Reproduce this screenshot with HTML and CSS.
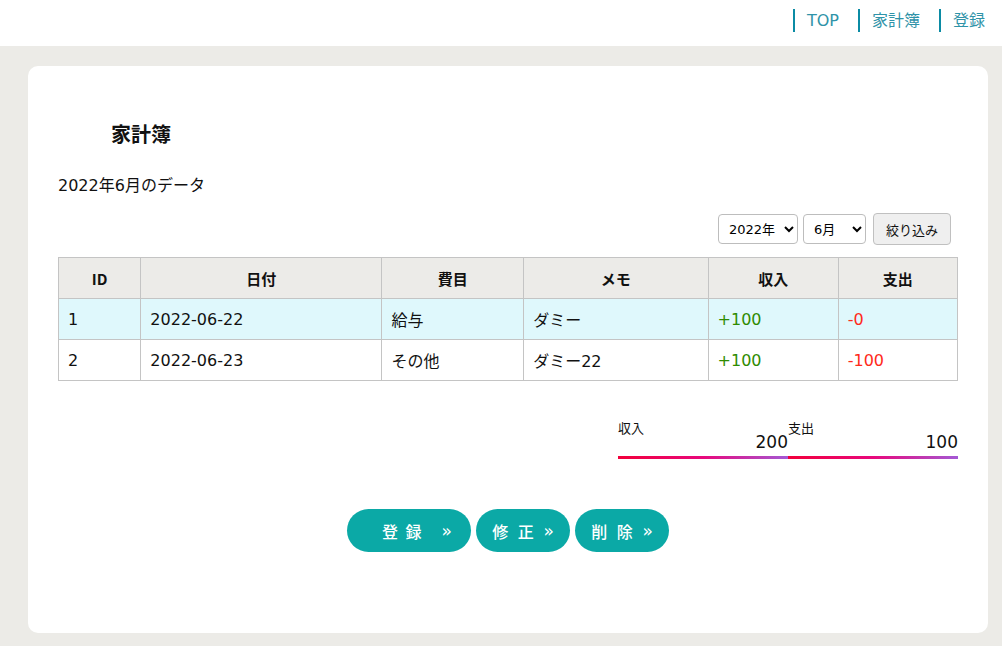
FILE: index.html
```html
<!DOCTYPE html>
<html lang="ja">
<head>
<meta charset="utf-8">
<title>家計簿</title>
<link rel="stylesheet" href="styles.css">
</head>
<body>
<header class="header">
  <nav class="nav">
    <a class="nav-item" href="#">TOP</a>
    <a class="nav-item" href="#">家計簿</a>
    <a class="nav-item" href="#">登録</a>
  </nav>
</header>
<main class="card">
  <h1 class="title">家計簿</h1>
  <p class="subtitle">2022年6月のデータ</p>
  <form class="filter">
    <select class="sel sel-year"><option>2022年</option></select>
    <select class="sel sel-month"><option>6月</option></select>
    <button type="button" class="filter-btn">絞り込み</button>
  </form>
  <table class="table">
    <thead>
      <tr><th class="c-id">ID</th><th class="c-date">日付</th><th class="c-cat">費目</th><th class="c-memo">メモ</th><th class="c-in">収入</th><th class="c-out">支出</th></tr>
    </thead>
    <tbody>
      <tr class="hl"><td>1</td><td>2022-06-22</td><td>給与</td><td>ダミー</td><td class="plus">+100</td><td class="minus">-0</td></tr>
      <tr><td>2</td><td>2022-06-23</td><td>その他</td><td>ダミー22</td><td class="plus">+100</td><td class="minus">-100</td></tr>
    </tbody>
  </table>
  <div class="totals">
    <div class="total"><span class="total-label">収入</span><span class="total-num">200</span></div>
    <div class="total"><span class="total-label">支出</span><span class="total-num">100</span></div>
  </div>
  <div class="actions">
    <a class="btn btn-wide" href="#">登 録　<span class="arr">»</span></a>
    <a class="btn" href="#">修 正 <span class="arr">»</span></a>
    <a class="btn" href="#">削 除 <span class="arr">»</span></a>
  </div>
</main>
</body>
</html>
```
FILE: styles.css
```css
html, body { margin: 0; padding: 0; }
body {
  background: #ecebe7;
  font-family: "DejaVu Sans", "Noto Sans CJK JP", sans-serif;
  color: #111;
  font-size: 16px;
}
.header {
  background: #fff;
  height: 46px;
  display: flex;
  justify-content: flex-end;
  align-items: flex-start;
}
.nav {
  display: flex;
  padding: 9px 17px 0 0;
}
.nav-item {
  display: block;
  border-left: 2px solid #0b8ba4;
  padding-left: 12px;
  margin-left: 19px;
  line-height: 23px;
  color: #2f93a8;
  text-decoration: none;
  font-size: 16px;
  font-family: "DejaVu Sans", "Noto Sans CJK JP", sans-serif;
}
.nav-item:first-child { margin-left: 0; }
.card {
  display: block;
  background: #fff;
  margin: 20px 14px 0 28px;
  height: 567px;
  border-radius: 10px;
  padding: 0 30px;
  box-sizing: border-box;
}
.title {
  margin: 0;
  padding: 54px 0 0 53px;
  font-size: 20px;
  line-height: 28px;
  font-weight: bold;
  font-family: "Noto Sans CJK JP", sans-serif;
}
.subtitle {
  margin: 26px 0 0;
  font-size: 16px;
  line-height: 24px;
}
.filter {
  display: flex;
  justify-content: flex-end;
  align-items: center;
  gap: 5px;
  margin: 14px 7px 0 0;
  height: 34px;
}
.sel {
  height: 30px;
  border: 1px solid #bdbdbd;
  border-radius: 4px;
  background: #fff;
  font-size: 13px;
  font-family: "DejaVu Sans", "Noto Sans CJK JP", sans-serif;
  padding: 0 4px 0 6px;
  color: #000;
}
.sel-year { width: 80px; }
.sel-month { width: 63px; margin-right: 2px; }
.filter-btn {
  width: 78px;
  height: 32px;
  border: 1px solid #c0c0c0;
  border-radius: 4px;
  background: #efefef;
  font-size: 13px;
  font-family: "Noto Sans CJK JP", sans-serif;
  color: #111;
  padding: 0;
}
.table {
  margin-top: 11px;
  width: 900px;
  border-collapse: collapse;
  font-size: 16px;
}
.table th, .table td {
  border: 1px solid #c4c4c4;
  height: 40px;
  padding: 0 0 0 9px;
  text-align: left;
}
.table th {
  background: #ecebe8;
  text-align: center;
  padding: 0;
  font-weight: bold;
  font-family: "Noto Sans CJK JP", sans-serif;
  font-size: 15px;
}
.c-id { width: 82px; }
.c-date { width: 242px; }
.c-cat { width: 142px; }
.c-memo { width: 185px; }
.c-in { width: 130px; }
.c-out { width: 119px; }
.hl td { background: #dff8fc; }
.plus { color: #2e8b00; }
.minus { color: #ff2a1a; }
.totals {
  display: flex;
  justify-content: flex-end;
  margin-top: 38px;
}
.total {
  width: 170px;
  height: 37px;
  border-bottom: 3px solid transparent;
  border-image: linear-gradient(90deg, #f2003a, #e8087c 50%, #a35ad6) 1;
  position: relative;
}
.total-label {
  position: absolute;
  left: 0;
  top: 1px;
  font-size: 13px;
  line-height: 16px;
  font-family: "Noto Sans CJK JP", sans-serif;
}
.total-num {
  position: absolute;
  right: 0;
  top: 12px;
  font-size: 17px;
  line-height: 22px;
}
.actions {
  display: flex;
  justify-content: center;
  gap: 5px;
  margin-top: 50px;
}
.btn {
  display: flex;
  align-items: center;
  justify-content: center;
  height: 43px;
  width: 94px;
  border-radius: 22px;
  background: #0ba9a6;
  color: #fff;
  text-decoration: none;
  font-size: 16px;
  letter-spacing: 3px;
  font-family: "Noto Sans CJK JP", sans-serif;
  font-weight: 500;
  white-space: pre;
}
.btn .arr {
  font-family: "DejaVu Sans", sans-serif;
  font-size: 17px;
  letter-spacing: 0;
}
.btn-wide {
  width: 124px;
  justify-content: flex-start;
  padding-left: 35px;
  box-sizing: border-box;
  letter-spacing: 2px;
}
```
